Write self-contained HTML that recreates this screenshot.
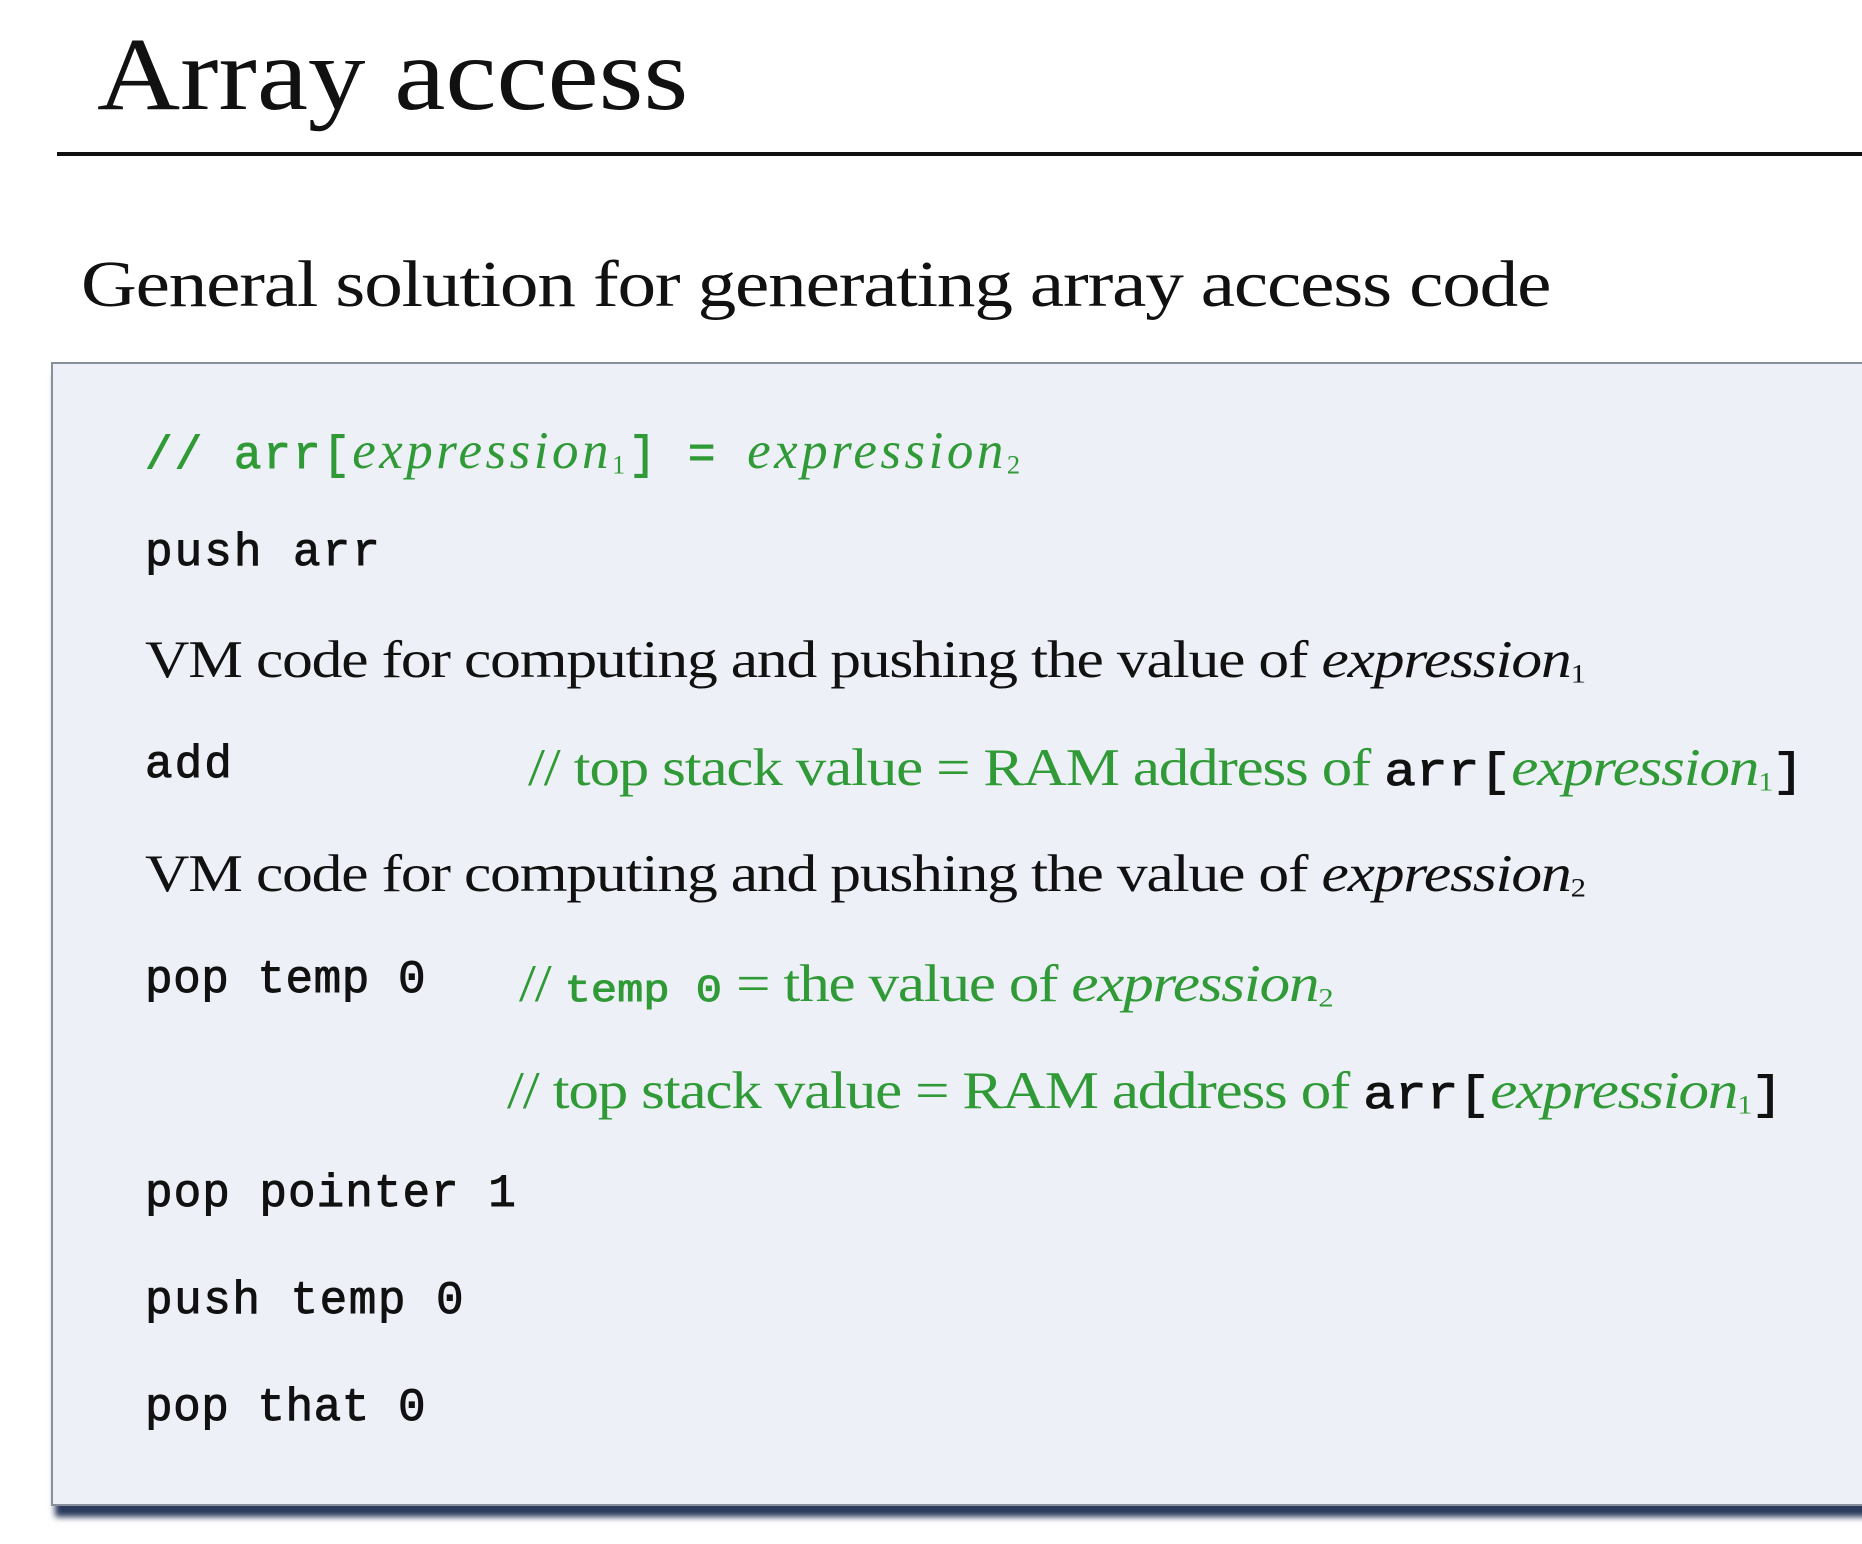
<!DOCTYPE html>
<html><head><meta charset="utf-8"><style>
html,body{margin:0;padding:0;width:1862px;height:1544px;background:#fff;overflow:hidden;position:relative}
.a{position:absolute;white-space:nowrap;transform-origin:0 0}
.serif{font-family:"Liberation Serif",serif}
.mono{font-family:"Liberation Mono",monospace;font-size:46px;letter-spacing:2px;color:#111;-webkit-text-stroke:0.9px currentColor}
.g{color:#2f9a36}
i{font-family:"Liberation Serif",serif;letter-spacing:-1px}
sub{font-size:0.5em;vertical-align:-0.2em;font-style:normal}
.ln{position:absolute;left:145px;white-space:nowrap;line-height:1;transform-origin:0 0}
.s{font-family:"Liberation Serif",serif;font-size:53px;color:#111;letter-spacing:-1px;transform:scaleX(1.16)}
.c{font-family:"Liberation Serif",serif;font-size:53px;letter-spacing:-1px;color:#2f9a36;transform:scaleX(1.15)}
</style></head><body>
<div class="a serif" style="left:97px;top:18px;font-size:104px;color:#111;line-height:1.1;transform:scaleX(1.107)">Array access</div>
<div class="a" style="left:57px;top:152px;width:1805px;height:4px;background:#111"></div>
<div class="a serif" style="left:81px;top:252px;font-size:66px;color:#111;letter-spacing:-1px;line-height:1;transform:scaleX(1.17)">General solution for generating array access code</div>
<div class="a" style="left:51px;top:362px;width:1830px;height:1140px;background:#eef0f8;border:2px solid #8a8f9c;box-shadow:4px 11px 6px #2c3b5c"></div>

<div class="ln g" style="top:425px"><span class="mono g">// arr[</span><i style="font-size:53px;letter-spacing:3.5px">expression<sub>1</sub></i><span class="mono g">] = </span><i style="font-size:53px;letter-spacing:3.5px">expression<sub>2</sub></i></div>
<div class="ln mono" style="top:530px">push arr</div>
<div class="ln s" style="top:634px">VM code for computing and pushing the value of <i>expression<sub>1</sub></i></div>
<div class="ln mono" style="top:742px">add</div>
<div class="a c" style="left:528px;top:738px">// top stack value = RAM address of <span class="mono" style="letter-spacing:0px">arr[</span><i>expression<sub>1</sub></i><span class="mono">]</span></div>
<div class="ln s" style="top:848px">VM code for computing and pushing the value of <i>expression<sub>2</sub></i></div>
<div class="ln mono" style="top:957px;letter-spacing:0.5px">pop temp 0</div>
<div class="a c" style="left:519px;top:954px">// <span class="mono g" style="font-size:38px;letter-spacing:0">temp 0</span> = the value of <i>expression<sub>2</sub></i></div>
<div class="a c" style="left:507px;top:1061px">// top stack value = RAM address of <span class="mono" style="letter-spacing:0px">arr[</span><i>expression<sub>1</sub></i><span class="mono">]</span></div>
<div class="ln mono" style="top:1171px;letter-spacing:1px">pop pointer 1</div>
<div class="ln mono" style="top:1278px;letter-spacing:1.5px">push temp 0</div>
<div class="ln mono" style="top:1385px;letter-spacing:0.5px">pop that 0</div>
</body></html>
